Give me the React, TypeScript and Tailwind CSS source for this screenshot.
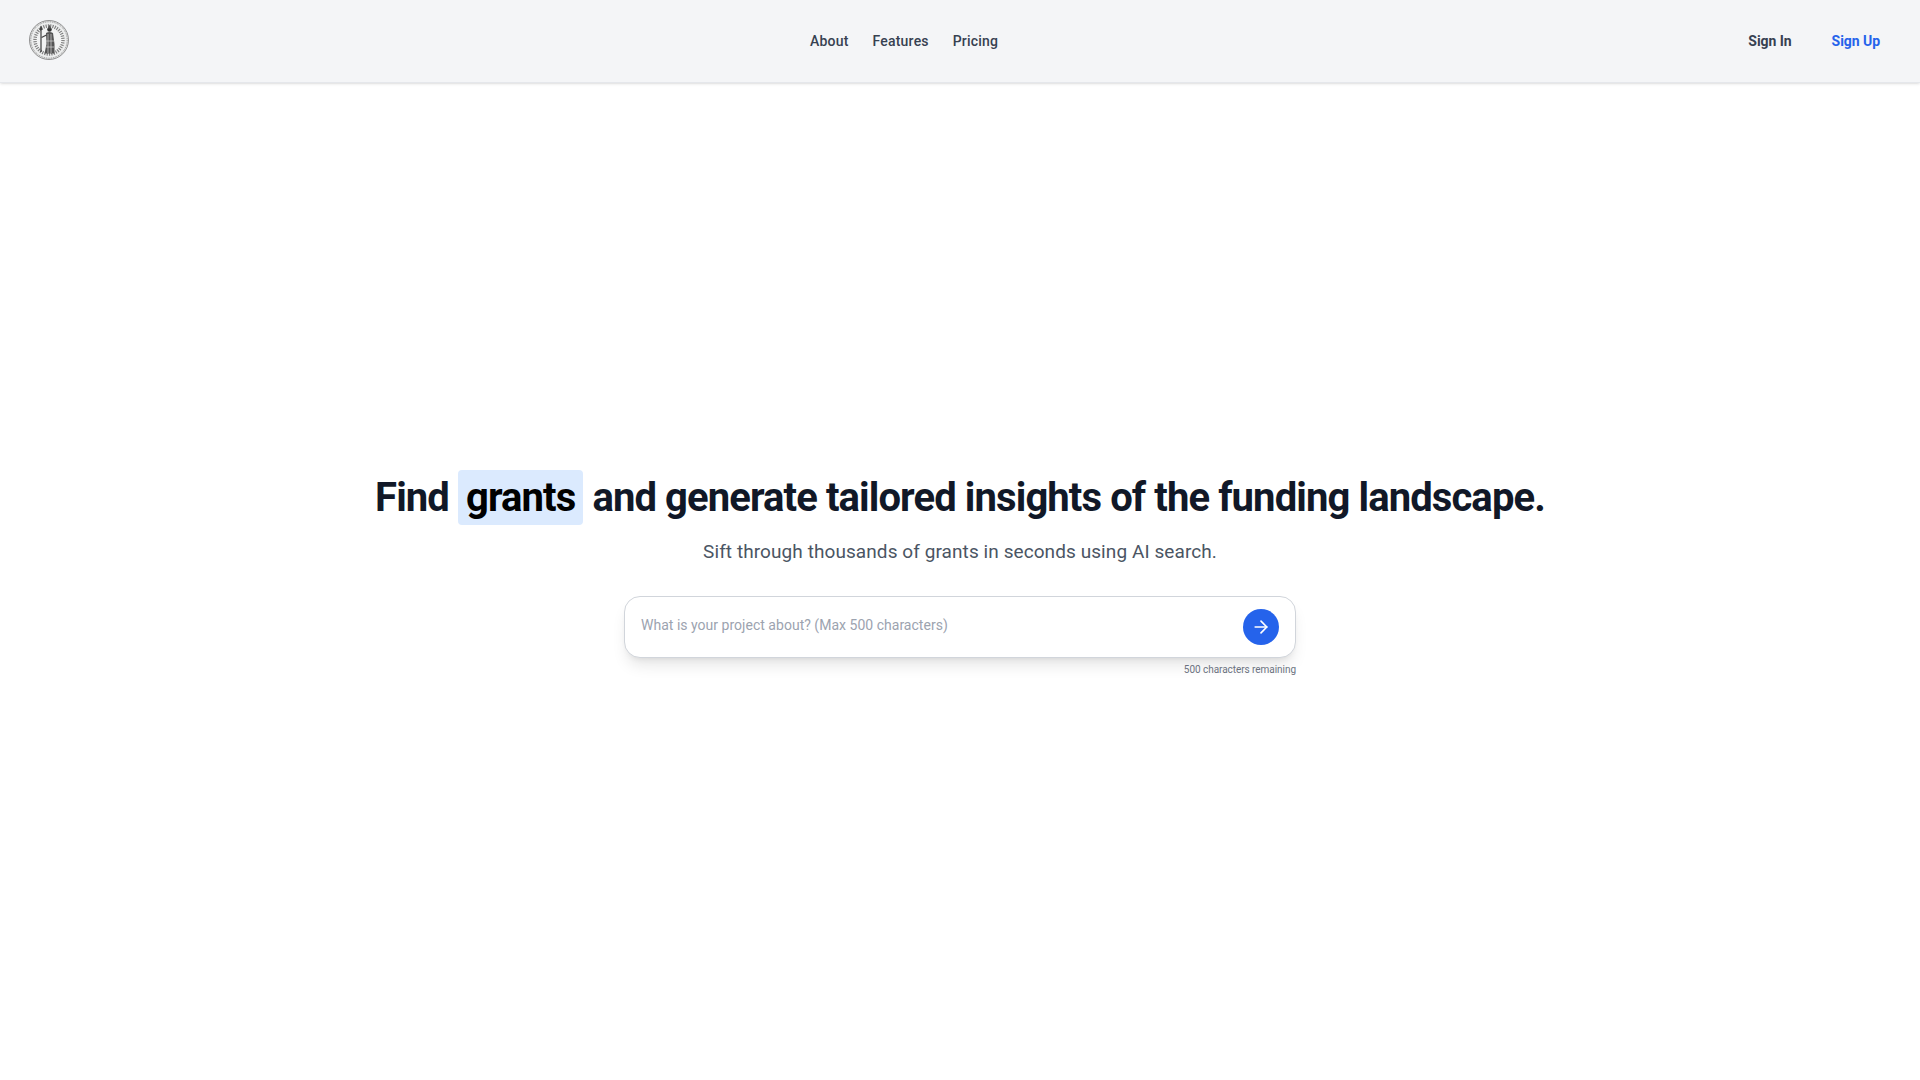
import { ArrowRight } from 'lucide-react';

function Seal() {
  return (
    <svg viewBox="0 0 40 40" className="w-10 h-10 -mt-[2px]">
      <circle cx="20" cy="20" r="19.5" fill="#eceded" stroke="#777" strokeWidth="0.8" />
      <circle cx="20" cy="20" r="18.2" fill="none" stroke="#777" strokeWidth="0.8" strokeDasharray="1 0.8" />
      <circle cx="20" cy="20" r="15.5" fill="#f2f3f3" />
      {/* ring lettering, drawn as ticks */}
      <circle cx="20" cy="20" r="14" fill="none" stroke="#666" strokeWidth="3.4" strokeDasharray="1.2 1.1" opacity="0.8" />
      <circle cx="20" cy="20" r="11.5" fill="#f2f3f3" />
      {/* figure with spear */}
      <path d="M12 6.5 V32" stroke="#2b2b2b" strokeWidth="1.1" />
      <path d="M10.4 10 L12 5.5 L13.6 10 Z" fill="#444" />
      <circle cx="20.5" cy="9.5" r="2.3" fill="#333" />
      <path d="M20.5 4.5 L22.2 8.5 H18.8 Z" fill="#555" />
      <path d="M17 13 Q20.5 11 24 13 L25.5 24 L25.5 33.5 H15.5 L17.5 24 Z" fill="#555" />
      <path d="M19 14 V33 M22 14 V33 M17 21 H25 M16.5 27 H25" stroke="#d8d8d8" strokeWidth="0.7" />
      <path d="M17.5 15 L12.5 17.5" stroke="#444" strokeWidth="1.3" />
    </svg>
  );
}

export default function App() {
  return (
    <div className="min-h-screen flex flex-col bg-white font-['Roboto',sans-serif]">
      <header className="h-[83px] bg-[#f4f5f7] border-b border-[#e5e7eb] shadow-sm grid grid-cols-[781px_1fr_auto] items-center pl-[29px] pr-10">
        <Seal />
        <nav className="flex gap-6 text-sm font-medium text-[#374151] tracking-[0.2px]">
          <a>About</a>
          <a>Features</a>
          <a>Pricing</a>
        </nav>
        <div className="flex gap-10 text-sm font-bold tracking-[-0.05px]">
          <a className="text-[#374151]">Sign In</a>
          <a className="text-[#2563eb]">Sign Up</a>
        </div>
      </header>

      <main className="flex-1 flex flex-col items-center pt-[387px]">
        <h1 className="text-[40px] leading-[55px] font-bold tracking-[-0.9px] text-[#111827] flex gap-[9px]">
          <span>Find</span>
          <span className="bg-[#dbeafe] rounded px-2 text-black">grants</span>
          <span>and generate tailored insights of the funding landscape.</span>
        </h1>
        <p className="mt-[13px] text-[19px] leading-7 tracking-[0.08px] text-[#4b5563]">
          Sift through thousands of grants in seconds using AI search.
        </p>
        <div className="mt-[30px] w-[672px]">
          <div className="h-[62px] bg-white border border-[#d1d5db] rounded-2xl shadow-lg flex items-center justify-between pl-4 pr-4">
            <span className="text-sm text-[#9ca3af] tracking-[0.02px] -mt-[4px]">What is your project about? (Max 500 characters)</span>
            <button className="w-9 h-9 rounded-full bg-[#2563eb] text-white flex items-center justify-center">
              <ArrowRight size={20} />
            </button>
          </div>
          <p className="mt-1 text-[10px] leading-4 text-right text-[#6b7280] tracking-[-0.05px]">500 characters remaining</p>
        </div>
      </main>
    </div>
  );
}
